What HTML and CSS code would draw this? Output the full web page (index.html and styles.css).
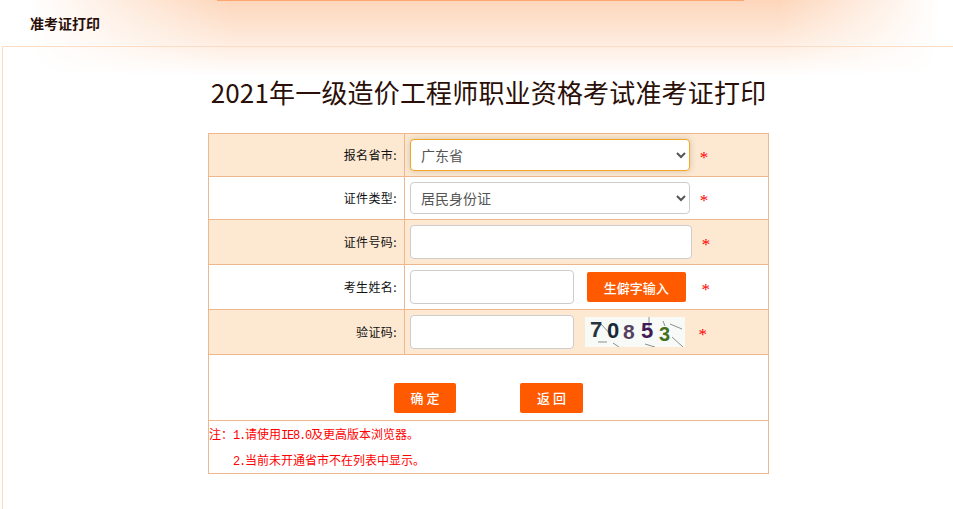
FILE: index.html
```html
<!DOCTYPE html>
<html lang="zh-CN">
<head>
    <meta charset="UTF-8">
    <meta name="viewport" content="width=device-width, initial-scale=1.0">
    <title>准考证打印</title>
    <link rel="stylesheet" href="styles.css">
</head>
<body>
    <div class="top_bar"></div>
    <div class="header">准考证打印</div>

    <div class="main">
        <h1 class="title">2021年一级造价工程师职业资格考试准考证打印</h1>

        <table class="form_table">
            <tr class="row row_a shaded">
                <td class="label">报名省市:</td>
                <td class="field">
                    <select class="control select_box focused">
                        <option>广东省</option>
                    </select>
                    <span class="star star_select">*</span>
                </td>
            </tr>
            <tr class="row row_a">
                <td class="label">证件类型:</td>
                <td class="field">
                    <select class="control select_box">
                        <option>居民身份证</option>
                    </select>
                    <span class="star star_select">*</span>
                </td>
            </tr>
            <tr class="row row_b shaded">
                <td class="label">证件号码:</td>
                <td class="field">
                    <input type="text" class="control text_long"/>
                    <span class="star star_long">*</span>
                </td>
            </tr>
            <tr class="row row_b">
                <td class="label">考生姓名:</td>
                <td class="field">
                    <input type="text" class="control text_short"/>
                    <button class="btn btn_rare">生僻字输入</button>
                    <span class="star star_rare">*</span>
                </td>
            </tr>
            <tr class="row row_b shaded">
                <td class="label">验证码:</td>
                <td class="field">
                    <input type="text" class="control text_short"/>
                    <svg class="captcha" width="100" height="30" viewBox="0 0 100 30">
                        <rect width="100" height="30" fill="#f8faf7"/>
                        <g stroke="#8a8f92" stroke-width="1" fill="none">
                            <path d="M64 0V12"/>
                            <path d="M85 7L97 12"/>
                            <path d="M87 20L98 30"/>
                            <path d="M13 25H22"/>
                            <path d="M28 26L34 30"/>
                            <path d="M60 27L70 30"/>
                            <path d="M15 6L28 20"/>
                            <path d="M78 4L80 9"/>
                        </g>
                        <text x="5" y="20" class="digit" fill="#27343f" font-size="22">7</text>
                        <text x="22" y="21" class="digit" fill="#152a38" font-size="22">0</text>
                        <text x="38" y="22" class="digit" fill="#54405f" font-size="21">8</text>
                        <text x="56" y="21" class="digit" fill="#421c56" font-size="22">5</text>
                        <text x="74" y="24" class="digit" fill="#44701f" font-size="20">3</text>
                    </svg>
                    <span class="star star_code">*</span>
                </td>
            </tr>
            <tr class="row_btn">
                <td colspan="2">
                    <div class="btn_line">
                        <button class="btn btn_main">确 定</button>
                        <button class="btn btn_main btn_back">返 回</button>
                    </div>
                </td>
            </tr>
            <tr class="row_note">
                <td colspan="2">
                    <p class="note">注：<span class="latin">1.</span>请使用<span class="latin">IE8.0</span>及更高版本浏览器。</p>
                    <p class="note note_two"><span class="latin">2.</span>当前未开通省市不在列表中显示。</p>
                </td>
            </tr>
        </table>
    </div>
</body>
</html>
```

FILE: styles.css
```css
html, body {
    height: 100%;
}

body {
    margin: 0;
    padding: 0;
    overflow: hidden;
    font-family: "Noto Sans CJK SC", "Liberation Sans", sans-serif;
    background-color: #fff;
    background-image:
        linear-gradient(to right, #fff 30px, #000 230px, #000 780px, #fff 940px),
        linear-gradient(to bottom, #fdd6bb 0, #feeadc 40px, #fff 76px);
    background-size: 953px 76px;
    background-repeat: no-repeat;
    background-blend-mode: screen, normal;
}

.top_bar {
    width: 527px;
    height: 1px;
    margin-left: 217px;
    background: #fda873;
}

.header {
    height: 45px;
    padding-left: 30px;
    box-sizing: border-box;
    line-height: 44px;
    font-size: 14px;
    font-weight: bold;
    color: #2a0f08;
}

.main {
    margin-left: 2px;
    height: 463px;
    box-sizing: border-box;
    border-top: 1px solid #fcdcc2;
    border-left: 1px solid #fcdcc2;
    padding-left: 205px;
}

.title {
    width: 561px;
    margin: 0;
    padding-top: 26px;
    height: 33px;
    line-height: 38px;
    text-align: center;
    font-size: 26px;
    font-weight: normal;
    letter-spacing: 0.17px;
    color: #2a0f08;
    white-space: nowrap;
}

.form_table {
    width: 561px;
    margin-top: 27px;
    border-collapse: collapse;
    table-layout: fixed;
    font-size: 12px;
}

.form_table td {
    border: 1px solid #eeb78e;
    padding: 0;
}

.row_a {
    height: 43px;
}

.row_b {
    height: 45px;
}

.shaded {
    background: #fde9d2;
}

.label {
    width: 188px;
    padding-right: 7px !important;
    padding-bottom: 2px !important;
    text-align: right;
    font-size: 12px;
    letter-spacing: 0.4px;
    color: #111;
}

.field {
    padding-left: 5px !important;
    white-space: nowrap;
}

.control {
    box-sizing: border-box;
    border: 1px solid #ccc;
    border-radius: 4px;
    background-color: #fff;
    vertical-align: middle;
    outline: none;
    font-family: inherit;
    font-size: 14px;
    color: #555;
}

.select_box {
    width: 280px;
    height: 32px;
    padding-left: 6px;
}

.focused {
    border-color: #f5a623;
    box-shadow: 0 0 6px rgba(120, 120, 100, 0.35);
}

.text_long {
    width: 282px;
    height: 34px;
}

.text_short {
    width: 164px;
    height: 34px;
}

.btn {
    border: none;
    border-radius: 2px;
    padding: 0;
    background: #ff5a00;
    color: #fff;
    font-family: inherit;
    vertical-align: middle;
}

.btn_rare {
    width: 99px;
    height: 30px;
    margin-left: 10px;
    font-size: 13px;
    font-weight: 500;
}

.captcha {
    margin-left: 8px;
    vertical-align: middle;
}

.digit {
    font-family: "Liberation Sans", sans-serif;
    font-weight: bold;
}

.star {
    font-family: "Liberation Serif", serif;
    font-size: 17px;
    color: #f00;
    vertical-align: middle;
    position: relative;
    top: 3px;
}

.star_select {
    margin-left: 7px;
}

.star_long {
    margin-left: 7px;
}

.star_rare {
    margin-left: 13px;
}

.star_code {
    margin-left: 11px;
}

.row_btn {
    height: 66px;
}

.btn_line {
    display: flex;
    padding: 27px 0 7px 185px;
}

.btn_main {
    width: 62px;
    height: 30px;
    font-size: 13px;
    font-weight: 500;
}

.btn_back {
    width: 63px;
    margin-left: 64px;
}

.row_note {
    height: 53px;
}

.note {
    margin: 0;
    height: 26px;
    line-height: 25px;
    font-size: 12px;
    color: #f00;
}

.note_two {
    padding-left: 24px;
}

.latin {
    font-family: "Liberation Mono", monospace;
    font-size: 12px;
    letter-spacing: -1.2px;
}
```
